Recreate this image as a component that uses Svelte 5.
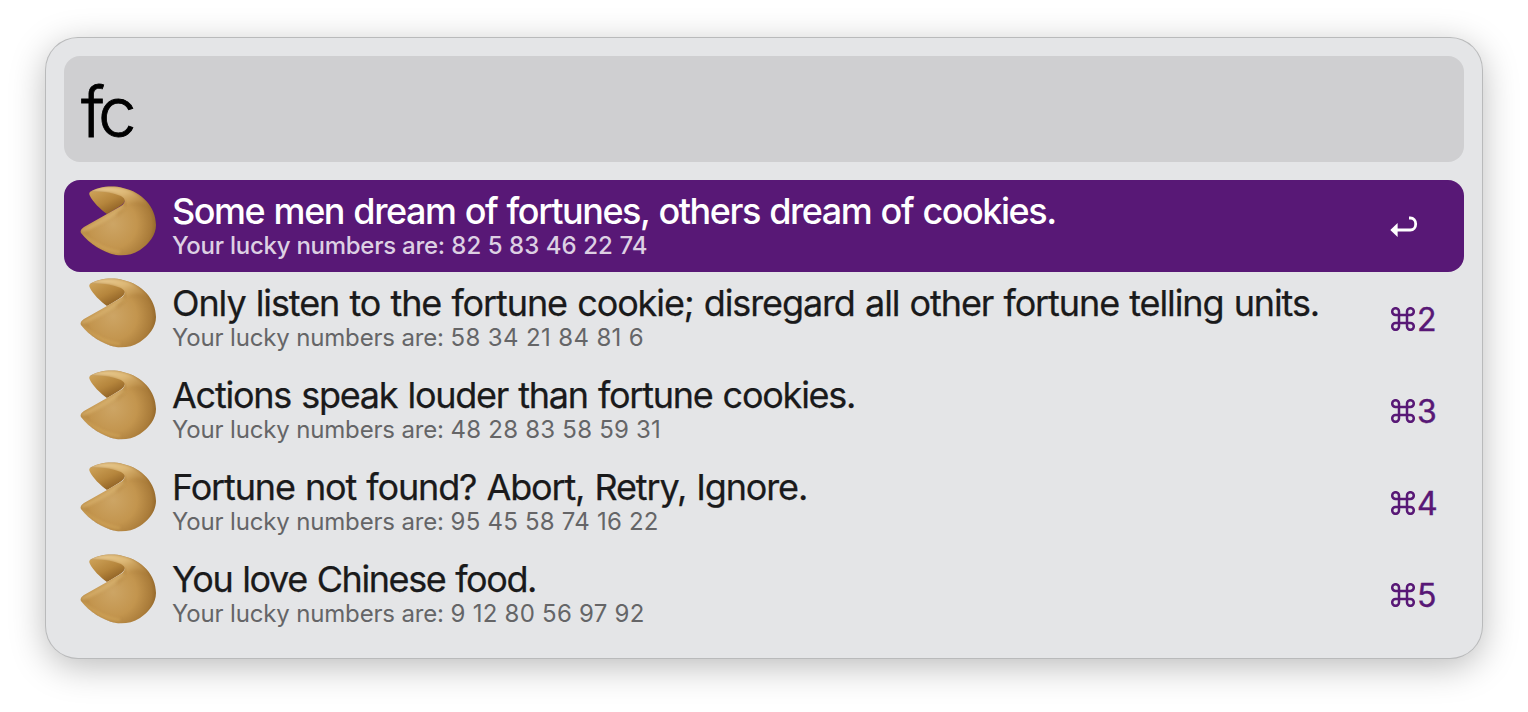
<script>
  const results = [
    { title: 'Some men dream of fortunes, others dream of cookies.', numbers: '82 5 83 46 22 74', spacing: -1.46, digits: 0.06 },
    { title: 'Only listen to the fortune cookie; disregard all other fortune telling units.', numbers: '58 34 21 84 81 6', spacing: -1.105, digits: 0.36 },
    { title: 'Actions speak louder than fortune cookies.', numbers: '48 28 83 58 59 31', spacing: -1.24, digits: 0.22 },
    { title: 'Fortune not found? Abort, Retry, Ignore.', numbers: '95 45 58 74 16 22', spacing: -1.15, digits: 0.22 },
    { title: 'You love Chinese food.', numbers: '9 12 80 56 97 92', spacing: -1.41, digits: 0.25 }
  ];
  let selected = $state(0);
</script>

<svg class="defs" width="0" height="0" aria-hidden="true">
  <defs>
    <radialGradient id="shell" gradientUnits="userSpaceOnUse" cx="43" cy="46" r="48">
      <stop offset="0" stop-color="#cda565" />
      <stop offset=".5" stop-color="#c3954e" />
      <stop offset=".8" stop-color="#a97b39" />
      <stop offset="1" stop-color="#80571f" />
    </radialGradient>
    <linearGradient id="flap" x1="0" y1="0" x2=".75" y2="1">
      <stop offset="0" stop-color="#d0a55b" />
      <stop offset=".55" stop-color="#b5853c" />
      <stop offset="1" stop-color="#87591f" />
    </linearGradient>
    <linearGradient id="gloss" x1="0" y1="0" x2="1" y2="1">
      <stop offset="0" stop-color="#ecd09a" />
      <stop offset=".45" stop-color="#e2be7c" stop-opacity=".9" />
      <stop offset="1" stop-color="#c2924a" stop-opacity="0" />
    </linearGradient>
    <filter id="soft" x="-20%" y="-20%" width="140%" height="140%"><feGaussianBlur stdDeviation="1.5" /></filter>
    <clipPath id="body">
      <path d="M20 14C27 9 42 7 53 10C72 14 86 29 86 47C86 57 79 66 70 72C62 77 54 78 46 77C32 74 20 66 11 55C10 53 11 51 14 49L37 36L51 28C56 24 56 21 51 18C42 14 30 13 20 14Z" />
    </clipPath>
    <symbol id="cookie" viewBox="9 6 79 74">
      <path d="M20 14C26 11 46 11 55 20C56 25 51 28 37 36C31 32 22 23 20 18C19 16 19 15 20 14Z" fill="url(#flap)" />
      <g clip-path="url(#body)">
        <rect x="5" y="5" width="90" height="80" fill="url(#shell)" />
        <path d="M20 12C40 4 68 8 80 29C70 22 62 24 56 26C54 16 37 13 20 14Z" fill="url(#gloss)" filter="url(#soft)" />
        <path d="M11 53Q32 45 54 28" stroke="#dfbb78" stroke-width="4" fill="none" opacity=".55" filter="url(#soft)" />
        <path d="M55 24Q55 31 47 37" stroke="#a57632" stroke-width="2" fill="none" opacity=".35" filter="url(#soft)" />
        <path d="M12 56Q32 73 50 74" stroke="#dfb566" stroke-width="2" fill="none" opacity=".6" filter="url(#soft)" />
        <path d="M10 57Q29 76 50 79" stroke="#87571b" stroke-width="2" fill="none" opacity=".8" />
      </g>
    </symbol>
  </defs>
</svg>

<main>
  <section class="panel">
    <div class="search">fc</div>
    <ul>
      {#each results as item, i}
        <li class:selected={i === selected}>
          <svg class="cookie" width="79" height="74"><use href="#cookie" /></svg>
          <div class="copy">
            <div class="title"><span style:letter-spacing="{item.spacing}px">{item.title}</span></div>
            <div class="sub"><span class="lead">Your lucky numbers are:</span> <span style:letter-spacing="{item.digits}px">{item.numbers}</span></div>
          </div>
          <div class="key">
            {#if i === selected}
              <svg class="enter" width="28" height="22" viewBox="0 0 28 22">
                <path d="M19 2h1.300c3.200 0 5.400 2.600 5.400 6s-2.200 6-5.400 6H7" fill="none" stroke="#fff" stroke-width="2.800" />
                <path d="M.3 14 7.600 7v14Z" fill="#fff" />
              </svg>
            {:else}
              <svg class="cmd" width="24" height="24" viewBox="0 0 24 24">
                <path d="M8 8V4.600A3.400 3.400 0 1 0 4.600 8H19.400A3.400 3.400 0 1 0 16 4.600V19.400A3.400 3.400 0 1 0 19.400 16H4.600A3.400 3.400 0 1 0 8 19.400Z" fill="none" stroke="currentColor" stroke-width="2.500" />
              </svg><span>{i + 1}</span>
            {/if}
          </div>
        </li>
      {/each}
    </ul>
  </section>
</main>

<style>
  :global(body) { background: #fff; }
  .defs { position: absolute; }
  main {
    box-sizing: border-box;
    width: 1528px;
    height: 712px;
    padding: 38px 46px 54px;
    overflow: hidden;
    font-family: Inter, "Liberation Sans", sans-serif;
  }
  .panel {
    box-sizing: border-box;
    height: 620px;
    padding: 18px;
    border-radius: 32px;
    background: #e4e5e7;
    box-shadow: 0 0 0 1px #b9babb, 0 8px 36px rgba(0, 0, 0, .28);
  }
  .search {
    box-sizing: border-box;
    height: 106px;
    padding-left: 17px;
    border-radius: 16px;
    background: #cfcfd1;
    font-size: 69px;
    font-weight: 300;
    line-height: 112px;
    letter-spacing: -5px;
    -webkit-text-stroke: .8px #000;
    color: #000;
  }
  ul { list-style: none; margin: 18px 0 0; padding: 0; }
  li {
    display: flex;
    box-sizing: border-box;
    height: 92px;
    padding-left: 15px;
    border-radius: 16px;
    color: #1a1a1b;
  }
  .cookie { margin-top: 4px; flex: none; }
  .copy { flex: 1; min-width: 0; margin-left: 14px; white-space: nowrap; }
  .title { height: 50px; font-size: 36px; line-height: 63px; word-spacing: 1.2px; -webkit-text-stroke: .25px currentColor; }
  .sub { font-size: 24px; line-height: 32px; color: #656567; }
  .lead { letter-spacing: -.16px; }
  .key {
    flex: none;
    width: 73px;
    display: flex;
    align-items: center;
    padding-top: 1px;
    font-size: 32px;
    color: #581876;
  }
  .key span { margin: 1px 0 0 2px; -webkit-text-stroke: .4px currentColor; }
  .enter { margin-left: -1px; }
  .selected { background: #581876; color: #fff; }
  .selected .title { font-weight: 500; -webkit-text-stroke: 0; }
  .selected .sub { color: #ddd0e3; font-weight: 500; }
  .selected .lead { letter-spacing: -.26px; }
</style>
